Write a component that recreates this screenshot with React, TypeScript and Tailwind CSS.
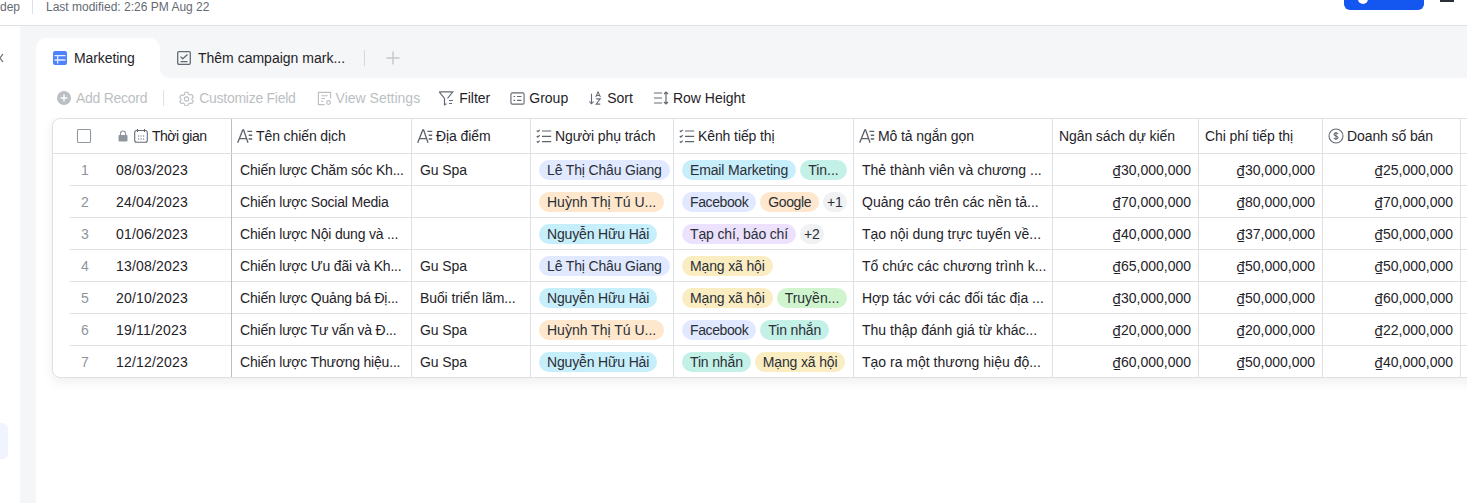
import type { ReactNode } from "react";

type Tone = "indigo" | "orange" | "sky" | "teal" | "purple" | "yellow" | "green" | "gray";

const toneClass: Record<Tone, string> = {
  indigo: "bg-[#e0e9ff]",
  orange: "bg-[#fee7cd]",
  sky: "bg-[#c7eefb]",
  teal: "bg-[#c3f0e7]",
  purple: "bg-[#ece2fe]",
  yellow: "bg-[#faedc2]",
  green: "bg-[#d0f5ce]",
  gray: "bg-[#f0f1f3]",
};

type Tag = { label: string; tone: Tone };

type Row = {
  date: string;
  name: string;
  place: string;
  owner: Tag;
  channels: Tag[];
  desc: string;
  budget: string;
  cost: string;
  sales: string;
};

const rows: Row[] = [
  { date: "08/03/2023", name: "Chiến lược Chăm sóc Kh...", place: "Gu Spa", owner: { label: "Lê Thị Châu Giang", tone: "indigo" }, channels: [{ label: "Email Marketing", tone: "sky" }, { label: "Tin...", tone: "teal" }], desc: "Thẻ thành viên và chương ...", budget: "30,000,000", cost: "30,000,000", sales: "25,000,000" },
  { date: "24/04/2023", name: "Chiến lược Social Media", place: "", owner: { label: "Huỳnh Thị Tú U...", tone: "orange" }, channels: [{ label: "Facebook", tone: "indigo" }, { label: "Google", tone: "orange" }, { label: "+1", tone: "gray" }], desc: "Quảng cáo trên các nền tả...", budget: "70,000,000", cost: "80,000,000", sales: "70,000,000" },
  { date: "01/06/2023", name: "Chiến lược Nội dung và ...", place: "", owner: { label: "Nguyễn Hữu Hải", tone: "sky" }, channels: [{ label: "Tạp chí, báo chí", tone: "purple" }, { label: "+2", tone: "gray" }], desc: "Tạo nội dung trực tuyến về...", budget: "40,000,000", cost: "37,000,000", sales: "50,000,000" },
  { date: "13/08/2023", name: "Chiến lược Ưu đãi và Kh...", place: "Gu Spa", owner: { label: "Lê Thị Châu Giang", tone: "indigo" }, channels: [{ label: "Mạng xã hội", tone: "yellow" }], desc: "Tổ chức các chương trình k...", budget: "65,000,000", cost: "50,000,000", sales: "50,000,000" },
  { date: "20/10/2023", name: "Chiến lược Quảng bá Đị...", place: "Buổi triển lãm...", owner: { label: "Nguyễn Hữu Hải", tone: "sky" }, channels: [{ label: "Mạng xã hội", tone: "yellow" }, { label: "Truyền...", tone: "green" }], desc: "Hợp tác với các đối tác địa ...", budget: "30,000,000", cost: "50,000,000", sales: "60,000,000" },
  { date: "19/11/2023", name: "Chiến lược Tư vấn và Đ...", place: "Gu Spa", owner: { label: "Huỳnh Thị Tú U...", tone: "orange" }, channels: [{ label: "Facebook", tone: "indigo" }, { label: "Tin nhắn", tone: "teal" }], desc: "Thu thập đánh giá từ khác...", budget: "20,000,000", cost: "20,000,000", sales: "22,000,000" },
  { date: "12/12/2023", name: "Chiến lược Thương hiệu...", place: "Gu Spa", owner: { label: "Nguyễn Hữu Hải", tone: "sky" }, channels: [{ label: "Tin nhắn", tone: "teal" }, { label: "Mạng xã hội", tone: "yellow" }], desc: "Tạo ra một thương hiệu độ...", budget: "60,000,000", cost: "50,000,000", sales: "40,000,000" },
];

function Icon({ children, size = 16, className = "" }: { children: ReactNode; size?: number; className?: string }) {
  return (
    <svg width={size} height={size} viewBox="0 0 16 16" fill="none" stroke="currentColor" strokeWidth="1.2" className={`shrink-0 ${className}`}>
      {children}
    </svg>
  );
}

const TextIcon = () => (
  <Icon className="text-[#5f646c]">
    <path strokeWidth="1.35" d="M.7 14.7 5.800 1.900h.8L11 14.700M2.500 10.600h6.900M10.400 3.400H15.200M11.700 7.200h3.500M11.700 11h3.500" />
  </Icon>
);

const ListIcon = () => (
  <Icon className="text-[#5f646c]">
    <path d="M.8 2.600l1.100 1.100 1.800-1.900M.8 8l1.100 1.100L3.700 7.200M.8 13.400l1.100 1.100 1.800-1.900M6 3h9.200M6 8.300h9.200M6 13.600h9.200" />
  </Icon>
);

function HeaderCell({ w, icon, label }: { w: string; icon?: ReactNode; label: string }) {
  return (
    <div className={`${w} shrink-0 flex items-center gap-[2px] px-[5px] border-r border-[#dee0e3] text-[#1f2329]`}>
      {icon}
      <span className="whitespace-nowrap pl-[1px] tracking-[-0.1px]">{label}</span>
    </div>
  );
}

function pillTracking(label: string) {
  if (label.endsWith("...")) return "";
  if (label === "Facebook" || label === "Google") return "tracking-[-0.4px]";
  return "tracking-[-0.15px]";
}

function Pill({ tag }: { tag: Tag }) {
  return (
    <span className={`${toneClass[tag.tone]} h-[20px] ${tag.tone === "gray" ? "px-[4px]" : "px-[8px]"} rounded-full flex items-center whitespace-nowrap shrink-0 text-[#2b2f36] ${pillTracking(tag.label)}`}>
      {tag.label}
    </span>
  );
}

function Money({ value, w, line }: { value: string; w: string; line: string }) {
  return (
    <div className={`${w} shrink-0 flex items-center justify-end px-[7px] border-r border-[#dee0e3] text-[#1f2329] whitespace-nowrap ${line}`}>
      <span className="font-['Noto_Sans',sans-serif]">₫</span>
      {value}
    </div>
  );
}

function DataRow({ row, index, last }: { row: Row; index: number; last: boolean }) {
  const line = last ? "" : "border-b pt-px border-[#dee0e3]";
  return (
    <div className="flex h-[32px]">
      <div className="w-[179px] shrink-0 flex border-r border-[#bbbfc4]">
        <div className="w-[17px] shrink-0" />
        <div className={`flex-1 flex items-center ${line}`}>
          <span className="w-[29px] text-center text-[#8f959e] pl-[1px]">{index + 1}</span>
          <span className="pl-[17px] text-[#1f2329] tracking-[0.2px]">{row.date}</span>
        </div>
      </div>
      <div className={`w-[180px] shrink-0 flex items-center px-[8px] border-r border-[#dee0e3] whitespace-nowrap overflow-hidden text-[#1f2329] tracking-[-0.2px] ${line}`}>{row.name}</div>
      <div className={`w-[119px] shrink-0 flex items-center px-[8px] border-r border-[#dee0e3] whitespace-nowrap overflow-hidden text-[#1f2329] tracking-[-0.1px] ${line}`}>{row.place}</div>
      <div className={`w-[143px] shrink-0 flex items-center px-[8px] border-r border-[#dee0e3] overflow-hidden ${line}`}>
        <Pill tag={row.owner} />
      </div>
      <div className={`w-[180px] shrink-0 flex items-center gap-[4px] px-[8px] border-r border-[#dee0e3] overflow-hidden ${line}`}>
        {row.channels.map((c) => (
          <Pill key={c.label} tag={c} />
        ))}
      </div>
      <div className={`w-[199px] shrink-0 flex items-center px-[8px] border-r border-[#dee0e3] whitespace-nowrap overflow-hidden text-[#1f2329] ${line}`}>{row.desc}</div>
      <Money w="w-[146px]" value={row.budget} line={line} />
      <Money w="w-[124px]" value={row.cost} line={line} />
      <Money w="w-[138px]" value={row.sales} line={line} />
      <div className={`w-[60px] shrink-0 ${line}`} />
    </div>
  );
}

function ToolButton({ icon, label, muted, tight, squeeze }: { icon: ReactNode; label: string; muted?: boolean; tight?: boolean; squeeze?: boolean }) {
  return (
    <div className={`flex items-center whitespace-nowrap ${tight ? "gap-[4px]" : "gap-[5px]"} ${muted ? "text-[#bbbfc4]" : "text-[#1f2329]"} ${squeeze ? "tracking-[-0.27px]" : ""}`}>
      {icon}
      <span>{label}</span>
    </div>
  );
}

export default function App() {
  return (
    <div className="w-[1467px] h-[503px] overflow-hidden flex flex-col bg-white text-[14px] font-['Liberation_Sans',sans-serif]">
      <div className="h-[26px] shrink-0 border-b border-[#dee0e3] flex items-start text-[12px] text-[#646a73]">
        <div className="h-[14px] flex items-center w-[33px] border-r border-[#dee0e3] whitespace-nowrap">dep</div>
        <div className="h-[14px] flex items-center pl-[13px] whitespace-nowrap">Last modified: 2:26 PM Aug 22</div>
        <div className="ml-auto flex items-start">
          <div className="w-[80px] h-[10px] bg-[#1456f0] rounded-b-[6px] overflow-hidden">
            <span className="block w-[10px] h-[10px] rounded-full bg-white ml-[14px] -mt-[6px]" />
          </div>
          <div className="w-[14px] h-[2px] bg-[#2b2f36] ml-[16px] mr-[13px]" />
        </div>
      </div>

      <div className="flex-1 flex min-h-0">
        <div className="w-[20px] shrink-0 flex flex-col">
          <div className="h-[27px]" />
          <svg width="4" height="10" viewBox="0 0 4 10" fill="none" stroke="#646a73" strokeWidth="1.2" className="shrink-0">
            <path d="M3 1 0 5l3 4" />
          </svg>
          <div className="h-[360px]" />
          <div className="w-[8px] h-[36px] bg-[#f0f4ff] rounded-r-[6px]" />
        </div>
        <div className="w-[16px] shrink-0 bg-[#f5f6f7]" />

        <div className="flex-1 min-w-0 flex flex-col">
          <div className="h-[52px] shrink-0 bg-[#f5f6f7] pt-[12px] flex items-start">
            <div className="w-[124px] h-[40px] bg-white rounded-t-[10px] flex items-center gap-[7px] pl-[17px] text-[#1f2329] relative tracking-[-0.1px]">
              <svg width="14" height="14" viewBox="0 0 14 14" className="shrink-0">
                <rect width="14" height="14" rx="2" fill="#4e83fd" />
                <path d="M1.500 4.700h11M1.500 9h11M4.700 4.700v7.800" stroke="#e6edff" strokeWidth="1.300" fill="none" />
              </svg>
              <span>Marketing</span>
              <span className="absolute -right-[10px] bottom-0 w-[10px] h-[10px] bg-white" />
              <span className="absolute -right-[10px] bottom-0 w-[10px] h-[10px] bg-[#f5f6f7] rounded-bl-[10px]" />
            </div>
            <div className="h-[40px] flex items-center gap-[7px] pl-[17px] text-[#1f2329] whitespace-nowrap">
              <svg width="14" height="14" viewBox="0 0 14 14" fill="none" stroke="#646a73" strokeWidth="1.3" className="shrink-0">
                <rect x="0.700" y="0.700" width="12.600" height="12.600" rx="1.200" />
                <path d="M3.500 5.600l2.200 2.200L10.500 3.400M3.500 10.600h7" />
              </svg>
              <span>Thêm campaign mark...</span>
            </div>
            <div className="w-px h-[16px] bg-[#d5d7da] mt-[12px] ml-[19px]" />
            <svg width="14" height="14" viewBox="0 0 14 14" fill="none" stroke="#c4c7cc" strokeWidth="1.400" className="mt-[13px] ml-[21px]">
              <path d="M7 0.500v13M0.500 7h13" />
            </svg>
          </div>

          <div className="h-[40px] shrink-0 flex items-center pl-[21px]">
            <ToolButton
              muted
              squeeze
              label="Add Record"
              icon={
                <svg width="14" height="14" viewBox="0 0 14 14" className="shrink-0">
                  <circle cx="7" cy="7" r="7" fill="#bbbfc4" />
                  <path d="M7 3.500v7M3.500 7h7" stroke="#fff" strokeWidth="1.400" />
                </svg>
              }
            />
            <div className="w-px h-[16px] bg-[#dee0e3] ml-[16px] mr-[15px]" />
            <ToolButton
              muted
              squeeze
              label="Customize Field"
              icon={
                <Icon size={15}>
                  <path d="M6.400 1.300h3.200l.5 1.900 1.700 1 1.900-.5 1.500 2.700-1.400 1.400v1.400l1.400 1.400-1.500 2.700-1.900-.5-1.700 1-.5 1.900H6.400l-.5-1.900-1.700-1-1.900.5L.8 11.100l1.400-1.400V8.300L.8 6.900l1.500-2.700 1.900.5 1.700-1z" strokeLinejoin="round" />
                  <circle cx="8" cy="8.500" r="2.300" />
                </Icon>
              }
            />
            <div className="w-[21px]" />
            <ToolButton
              muted
              tight
              label="View Settings"
              icon={
                <Icon size={15}>
                  <path d="M8 14.500H1.500v-13h13V8M4.500 5h7M4.500 8h4M4.500 11h2" />
                  <circle cx="12.300" cy="12.300" r="2" />
                </Icon>
              }
            />
            <div className="w-[18px]" />
            <ToolButton
              label="Filter"
              icon={
                <Icon size={16} className="text-[#646a73]">
                  <path d="M1.200 1.800h13.600L9.500 8.500M1.200 1.800 6.500 8.500v6.200l2-1M11 10.500h4M11 13.500h3" />
                </Icon>
              }
            />
            <div className="w-[20px]" />
            <ToolButton
              tight
              label="Group"
              icon={
                <Icon size={15} className="text-[#646a73]">
                  <rect x="1" y="2" width="14" height="12" rx="1.500" />
                  <path d="M3.800 5.800h1.700M7.500 5.800h4.700M3.800 10h1.700M7.500 10h4.700" />
                </Icon>
              }
            />
            <div className="w-[20px]" />
            <ToolButton
              label="Sort"
              icon={
                <Icon size={14} className="text-[#646a73]">
                  <path d="M4 3v11.500M1.500 12l2.500 2.500L6.500 12M8.800 7l2.700-6 2.700 6M9.700 5.200h3.600M9.300 9h4.700l-4.700 6H14" />
                </Icon>
              }
            />
            <div className="w-[20px]" />
            <ToolButton
              tight
              label="Row Height"
              icon={
                <Icon size={16} className="text-[#646a73]">
                  <path d="M1 3h8M1 8h8M1 13h8M13 2v12M11 4l2-2 2 2M11 12l2 2 2-2" />
                </Icon>
              }
            />
          </div>

          <div className="pl-[16px] flex-1 min-h-0 overflow-hidden">
            <div className="w-[1500px] h-[260px] border border-[#dee0e3] rounded-[8px] shadow-[0_4px_12px_rgba(31,35,41,0.07)] overflow-hidden">
              <div className="flex h-[35px] border-b border-[#dee0e3]">
                <div className="w-[179px] shrink-0 flex items-center border-r border-[#bbbfc4] text-[#1f2329]">
                  <span className="ml-[24px] w-[14px] h-[14px] border-[1.5px] border-[#8f959e] rounded-[1px] shrink-0" />
                  <svg width="12" height="12" viewBox="0 0 12 12" className="ml-[26px] shrink-0" fill="#8f959e">
                    <rect x="1.500" y="5" width="9" height="6.500" rx="1" />
                    <path d="M3.500 5V3.500a2.500 2.500 0 0 1 5 0V5" fill="none" stroke="#8f959e" strokeWidth="1.200" />
                  </svg>
                  <svg width="14" height="14" viewBox="0 0 14 14" fill="none" stroke="#646a73" strokeWidth="1.100" className="ml-[5px] shrink-0">
                    <rect x="0.700" y="1.500" width="12.600" height="11.800" rx="2" />
                    <path d="M3.500 0v3M10.500 0v3M4 7h1.200M6.500 7h1.200M9 7h1.200M4 10h1.200M6.500 10h1.200M9 10h1.200" />
                  </svg>
                  <span className="ml-[4px] whitespace-nowrap tracking-[-0.5px]">Thời gian</span>
                </div>
                <HeaderCell w="w-[180px]" icon={<TextIcon />} label="Tên chiến dịch" />
                <HeaderCell w="w-[119px]" icon={<TextIcon />} label="Địa điểm" />
                <HeaderCell w="w-[143px]" icon={<ListIcon />} label="Người phụ trách" />
                <HeaderCell w="w-[180px]" icon={<ListIcon />} label="Kênh tiếp thị" />
                <HeaderCell w="w-[199px]" icon={<TextIcon />} label="Mô tả ngắn gọn" />
                <HeaderCell w="w-[146px]" label="Ngân sách dự kiến" />
                <HeaderCell w="w-[124px]" label="Chi phí tiếp thị" />
                <HeaderCell
                  w="w-[138px]"
                  label="Doanh số bán"
                  icon={
                    <svg width="16" height="16" viewBox="0 0 16 16" fill="none" stroke="#646a73" strokeWidth="1.100" className="shrink-0">
                      <circle cx="8" cy="8" r="7" />
                      <path d="M10 6c-.3-.8-1-1.200-2-1.200-1.200 0-2 .6-2 1.500 0 2 4 1.200 4 3.300 0 1-.9 1.600-2 1.600-1 0-1.800-.5-2.100-1.300M8 4v8" />
                    </svg>
                  }
                />
              </div>
              {rows.map((row, i) => (
                <DataRow key={row.date} row={row} index={i} last={i === rows.length - 1} />
              ))}
            </div>
          </div>
        </div>
      </div>
    </div>
  );
}
